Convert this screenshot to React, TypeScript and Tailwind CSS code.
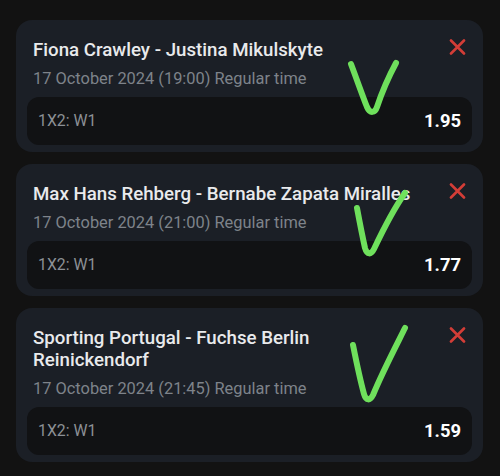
type Bet = {
  match: string
  date: string
  market: string
  odds: string
  check: string
}

const bets: Bet[] = [
  {
    match: 'Fiona Crawley - Justina Mikulskyte',
    date: '17 October 2024 (19:00) Regular time',
    market: '1X2: W1',
    odds: '1.95',
    check: 'M335 44 C341 60 347 77 351 87 C354 94 359 93 361 87 C366 72 373 56 380 43',
  },
  {
    match: 'Max Hans Rehberg - Bernabe Zapata Miralles',
    date: '17 October 2024 (21:00) Regular time',
    market: '1X2: W1',
    odds: '1.77',
    check: 'M341 44 C344 60 347 75 349 84 C351 91 355 91 358 85 C367 66 379 43 389 29',
  },
  {
    match: 'Sporting Portugal - Fuchse Berlin Reinickendorf',
    date: '17 October 2024 (21:45) Regular time',
    market: '1X2: W1',
    odds: '1.59',
    check: 'M337 37 C341 57 345 75 348 86 C350 93 354 93 357 87 C366 65 379 40 389 20',
  },
]

function CloseIcon() {
  return (
    <svg width="17" height="16" viewBox="0 0 17 16" className="shrink-0" fill="none">
      <path d="M2 1.5 L15 14.5 M15 1.5 L2 14.5" stroke="#d33d37" strokeWidth={2.6} strokeLinecap="round" />
    </svg>
  )
}

function BetCard({ bet }: { bet: Bet }) {
  return (
    <div className="relative rounded-[16px] bg-[#1b1f26] px-[11px] pt-[19px] pb-[7px]">
      <div className="flex items-start justify-between pl-[6px] pr-[6px]">
        <div className="max-w-[385px] text-[18.7px] leading-[22px] font-medium text-[#e9eaec]">
          {bet.match}
        </div>
        <CloseIcon />
      </div>
      <div className="mt-[7px] pl-[6px] text-[16.4px] leading-[22px] text-[#7e838a]">{bet.date}</div>
      <div className="mt-[7px] flex h-[48px] items-center justify-between rounded-[12px] bg-[#111214] px-[11px]">
        <span className="text-[15.8px] text-[#8c9096]">{bet.market}</span>
        <span className="text-[18.4px] font-bold text-white">{bet.odds}</span>
      </div>
      {/* hand-drawn tick on top of the card */}
      <svg className="pointer-events-none absolute inset-0 h-full w-full overflow-visible" fill="none">
        <path d={bet.check} stroke="#6fe05c" strokeWidth={6} strokeLinecap="round" strokeLinejoin="round" />
      </svg>
    </div>
  )
}

export default function App() {
  return (
    <div
      className="min-h-[476px] w-[500px] bg-[#121212] pt-[20px] pl-[16px] pr-[17px]"
      style={{ fontFamily: 'Roboto, "Liberation Sans", sans-serif' }}
    >
      <div className="flex flex-col gap-[12px]">
        {bets.map((bet) => (
          <BetCard key={bet.odds} bet={bet} />
        ))}
      </div>
    </div>
  )
}
